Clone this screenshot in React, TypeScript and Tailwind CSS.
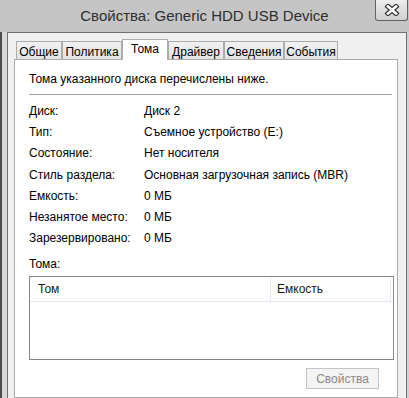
import React from 'react';

const tabs = [
  { label: 'Общие', w: 'w-[46px]' },
  { label: 'Политика', w: 'w-[60px]' },
  { label: 'Тома', w: 'w-[46px]', active: true },
  { label: 'Драйвер', w: 'w-[56px]' },
  { label: 'Сведения', w: 'w-[60px]' },
  { label: 'События', w: 'w-[54px]' },
];

const rows = [
  { label: 'Диск:', value: 'Диск 2', h: 'h-[21px]' },
  { label: 'Тип:', value: 'Съемное устройство (E:)', h: 'h-[21px]' },
  { label: 'Состояние:', value: 'Нет носителя', h: 'h-[22px]' },
  { label: 'Стиль раздела:', value: 'Основная загрузочная запись (MBR)', h: 'h-[21px]' },
  { label: 'Емкость:', value: '0 МБ', h: 'h-[21px]' },
  { label: 'Незанятое место:', value: '0 МБ', h: 'h-[21px]' },
  { label: 'Зарезервировано:', value: '0 МБ', h: 'h-[22px]' },
];

const CloseGlyph = () => (
  <svg width="16" height="12" viewBox="0 0 16 12">
    <path d="M4 2.5 L12 9.5 M12 2.5 L4 9.5" stroke="#3a3a3a" strokeWidth="5" strokeLinecap="square" />
    <path d="M4 2.5 L12 9.5 M12 2.5 L4 9.5" stroke="#ffffff" strokeWidth="2.6" strokeLinecap="square" />
  </svg>
);

export default function App() {
  return (
    <div className="w-[409px] h-[398px] overflow-hidden flex flex-col bg-gradient-to-b from-[#c4c4c4] to-[#d3d3d3] font-['Liberation_Sans',Arial,sans-serif] text-[12px] text-black">
      {/* title bar */}
      <div className="h-[32px] shrink-0 grid grid-cols-[1fr_auto_1fr]">
        <div />
        <div className="self-center text-[15px] leading-[18px] text-[#2e2e2e] mt-[-1px]">
          Свойства: Generic HDD USB Device
        </div>
        <div className="flex justify-end items-start pr-[1px]">
          <div className="w-[33px] h-[21px] border border-t-0 border-[#626262] rounded-b-[3px] bg-gradient-to-b from-[#eeeeee] to-[#cfcfcf] flex items-center justify-center">
            <CloseGlyph />
          </div>
        </div>
      </div>

      {/* body */}
      <div className="flex-1 flex">
        <div className="w-[7px] border-l-2 border-[#4b4b4b] bg-[#d6d6d6]" />
        <div className="w-[400px] border-l border-t border-r border-[#6f6f6f] bg-[#f0f0f0] flex flex-col pl-[6px] pr-[8px]">
          {/* tabs */}
          <div className="mt-[6px] h-[20px] flex items-end pl-[2px]">
            {tabs.map(t =>
              t.active ? (
                <div
                  key={t.label}
                  className={`${t.w} h-[21px] -mb-px relative z-10 border border-b-0 border-[#acacac] bg-white flex justify-center pt-[2px] leading-[15px]`}
                >
                  {t.label}
                </div>
              ) : (
                <div
                  key={t.label}
                  className={`${t.w} h-[18px] border border-b-0 border-[#acacac] bg-gradient-to-b from-[#f2f2f2] to-[#e3e3e3] flex justify-center pt-[3px] leading-[14px]`}
                >
                  {t.label}
                </div>
              )
            )}
          </div>

          {/* panel */}
          <div className="flex-1 border border-[#acacac] bg-white flex flex-col pl-[14px] pr-[3px]">
            <div className="mt-[12px] h-[15px] leading-[15px]">Тома указанного диска перечислены ниже.</div>
            <div className="mt-[7px] mr-[2px] h-px bg-[#a0a0a0]" />

            <div className="mt-[5px] flex flex-col">
              {rows.map(r => (
                <div key={r.label} className={`${r.h} grid grid-cols-[115px_1fr] items-center`}>
                  <span>{r.label}</span>
                  <span>{r.value}</span>
                </div>
              ))}
            </div>

            <div className="mt-[8px] h-[15px] leading-[15px]">Тома:</div>

            <div className="mt-[4px] h-[84px] border border-[#828790] bg-white">
              <div className="flex h-[25px] border-b border-[#e3e9f1] text-[#1a1a1a]">
                <div className="w-[241px] border-r border-[#e3e9f1] pl-[8px] flex items-center">Том</div>
                <div className="w-[120px] border-r border-[#e3e9f1] pl-[6px] flex items-center">Емкость</div>
              </div>
            </div>

            <div className="mt-[8px] flex justify-end pr-[15px]">
              <div className="w-[73px] h-[21px] border border-[#c3c6c9] bg-[#f4f4f4] text-[#8a8a8a] flex items-center justify-center">
                Свойства
              </div>
            </div>
          </div>
        </div>
        <div className="flex-1 bg-[#cfd2d8]" />
      </div>
    </div>
  );
}
